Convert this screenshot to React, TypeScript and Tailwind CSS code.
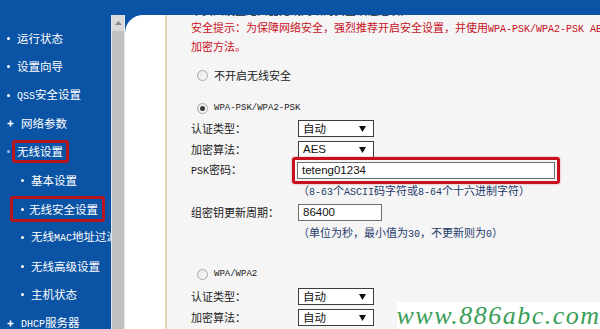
import React from "react"

const cjk = { fontFamily: '"Noto Sans CJK SC", "Liberation Sans", sans-serif' }
const mono = { fontFamily: '"Liberation Mono", "Noto Sans CJK SC", monospace' }
const arial = { fontFamily: '"Liberation Sans", Arial, sans-serif' }

function Dot({ dim }: { dim?: boolean }) {
  return <span className={`w-[3px] h-[3px] rounded-full shrink-0 ${dim ? "bg-[#9fb8d8]" : "bg-white"}`} />
}

function Plus() {
  return (
    <svg width="7" height="7" viewBox="0 0 7 7" className="shrink-0">
      <path d="M3.5 0.5v6M0.5 3.5h6" stroke="#fff" strokeWidth="1.6" />
    </svg>
  )
}

function NavItem({ label, sub, plus, boxed, dim }: { label: React.ReactNode; sub?: boolean; plus?: boolean; boxed?: boolean; dim?: boolean }) {
  const mark = plus ? <Plus /> : <Dot dim={dim} />
  return (
    <div className={`h-[28.5px] shrink-0 flex items-center ${sub ? "pl-[21px]" : "pl-[7px]"}`}>
      {boxed && sub ? (
        <div className="flex items-center gap-[5px] -ml-[11px] pl-[8px] pr-[4px] h-[26px] border-[3px] border-[#b8141f] rounded-[3px]">
          {mark}
          <span className="text-white text-[11.5px] leading-none">{label}</span>
        </div>
      ) : boxed ? (
        <div className="flex items-center gap-[7px] -mt-[2px]">
          {mark}
          <span className="flex items-center h-[23px] -ml-[5px] pl-[2px] pr-[3px] border-[3px] border-[#b8141f] rounded-[3px] text-white text-[11.5px] leading-none">
            {label}
          </span>
        </div>
      ) : (
        <div className="flex items-center gap-[7px]">
          {mark}
          <span className="text-white text-[11.5px] leading-none">{label}</span>
        </div>
      )}
    </div>
  )
}

function Arrow() {
  return (
    <svg width="7" height="6" viewBox="0 0 7 6">
      <path d="M0 0h7L3.5 6z" fill="#111" />
    </svg>
  )
}

function Select({ value, latin }: { value: string; latin?: boolean }) {
  return (
    <div className="w-[76px] h-[17px] border border-[#3c3c3c] bg-white flex items-center justify-between pl-[4px] pr-[7px]">
      <span className="text-[11.5px] leading-none text-[#111]" style={latin ? arial : cjk}>
        {value}
      </span>
      <Arrow />
    </div>
  )
}

function Radio({ checked }: { checked?: boolean }) {
  return (
    <span className="w-[11px] h-[11px] rounded-full border border-[#a9a9a9] bg-gradient-to-br from-[#e6e6e6] to-[#fbfbfb] flex items-center justify-center shrink-0">
      {checked && <span className="w-[5px] h-[5px] rounded-full bg-[#3a3a3a]" />}
    </span>
  )
}

function Row({ label, children }: { label: React.ReactNode; children: React.ReactNode }) {
  return (
    <div className="h-[21px] shrink-0 flex items-center">
      <div className="w-[107px] text-[11px] text-[#222] leading-none">{label}</div>
      {children}
    </div>
  )
}

export default function App() {
  return (
    <div className="w-[600px] h-[329px] flex bg-[#0a53a5] overflow-hidden relative" style={cjk}>
      {/* Sidebar */}
      <div className="w-[111px] shrink-0 flex flex-col pt-[24px]">
        <NavItem label="运行状态" />
        <NavItem label="设置向导" />
        <NavItem label={<><span style={mono} className="text-[10px]">QSS</span>安全设置</>} />
        <NavItem label="网络参数" plus />
        <NavItem label="无线设置" boxed dim />
        <NavItem label="基本设置" sub />
        <NavItem label="无线安全设置" sub boxed />
        <NavItem label={<span className="whitespace-nowrap">无线<span style={mono} className="text-[10px]">MAC</span>地址过滤</span>} sub />
        <NavItem label="无线高级设置" sub />
        <NavItem label="主机状态" sub />
        <NavItem label={<><span style={mono} className="text-[10px]">DHCP</span>服务器</>} plus />
      </div>

      {/* Right frame */}
      <div className="flex-1 flex flex-col min-w-0">
        <div className="h-[15px] shrink-0" />
        <div className="flex-1 flex min-h-0">
          {/* Scrollbar */}
          <div className="w-[14px] shrink-0 border-l border-[#dfe7f0] border-r border-[#7d7d7d] bg-[#c1c1c1] flex flex-col">
            <div className="h-[16px] bg-[#d9d9d9] flex items-center justify-center">
              <svg width="7" height="4" viewBox="0 0 7 4">
                <path d="M0 4L3.5 0L7 4z" fill="#8a8a8a" />
              </svg>
            </div>
          </div>
          {/* White gutter with curved corner */}
          <div className="w-[40px] shrink-0 bg-white rounded-tl-[18px]" />
          <div className="w-[2px] shrink-0 bg-[#e3d5b8]" />

          {/* Content */}
          <div className="flex-1 bg-[#f5f5f5] pl-[24px] overflow-hidden flex flex-col min-w-0">
            <div className="-mt-[12px] h-[14px] shrink-0 text-[11px] leading-[14px] text-[#222] whitespace-nowrap">
              本页面设置路由器无线网络的安全认证选项。
            </div>
            <div className="mt-[2px] shrink-0 text-[11px] leading-[17px] text-[#c8101c] whitespace-nowrap">
              安全提示：为保障网络安全，强烈推荐开启安全设置，并使用
              <span style={mono} className="text-[10px]">WPA-PSK/WPA2-PSK AES</span>
            </div>
            <div className="shrink-0 text-[11px] leading-[17px] text-[#c8101c]">加密方法。</div>

            <div className="mt-[10px] h-[20px] shrink-0 flex items-center pl-[6px] gap-[6px]">
              <Radio />
              <span className="text-[11px] text-[#222] leading-none">不开启无线安全</span>
            </div>
            <div className="mt-[13px] h-[20px] shrink-0 flex items-center pl-[6px] gap-[6px]">
              <Radio checked />
              <span style={mono} className="text-[9px] text-[#222] leading-none">WPA-PSK/WPA2-PSK</span>
            </div>

            <div className="shrink-0">
              <Row label="认证类型：">
                <Select value="自动" />
              </Row>
              <Row label="加密算法：">
                <Select value="AES" latin />
              </Row>
              <Row label={<><span style={mono} className="text-[10px]">PSK</span>密码：</>}>
                <div className="-ml-[6px] p-[2px] border-[3px] border-[#c8101c] rounded-[3px] shadow-[0_0_2px_rgba(200,16,28,0.5)]">
                  <div className="w-[258px] h-[17px] border border-[#6f6f6f] bg-white flex items-center pl-[4px]">
                    <span style={arial} className="text-[11.5px] leading-none text-[#111]">teteng01234</span>
                  </div>
                </div>
              </Row>
              <Row label="">
                <span className="text-[11px] text-[#1f3a6b] leading-none whitespace-nowrap">
                  （<span style={mono} className="text-[10px]">8-63</span>个<span style={mono} className="text-[10px]">ASCII</span>码字符或<span style={mono} className="text-[10px]">8-64</span>个十六进制字符）
                </span>
              </Row>
              <Row label="组密钥更新周期：">
                <div className="w-[84px] h-[17px] border border-[#6f6f6f] bg-white flex items-center pl-[4px]">
                  <span style={arial} className="text-[11.5px] leading-none text-[#111]">86400</span>
                </div>
              </Row>
              <Row label="">
                <span className="text-[11px] text-[#1f3a6b] leading-none whitespace-nowrap">
                  （单位为秒，最小值为<span style={mono} className="text-[10px]">30</span>，不更新则为<span style={mono} className="text-[10px]">0</span>）
                </span>
              </Row>
            </div>

            <div className="mt-[20px] h-[20px] shrink-0 flex items-center pl-[6px] gap-[6px]">
              <Radio />
              <span style={mono} className="text-[9px] text-[#222] leading-none">WPA/WPA2</span>
            </div>
            <div className="mt-[2px] shrink-0">
              <Row label="认证类型：">
                <Select value="自动" />
              </Row>
              <Row label="加密算法：">
                <Select value="自动" />
              </Row>
            </div>
          </div>
        </div>
      </div>

      {/* Watermark */}
      <div className="absolute left-[397px] top-[302px] w-[203px] h-[27px] bg-white flex items-center justify-center">
        <span
          className="text-[26px] italic leading-none text-[#3a9e58] tracking-[1.5px]"
          style={{ fontFamily: '"Liberation Serif", serif' }}
        >
          www.886abc.com
        </span>
      </div>
    </div>
  )
}
